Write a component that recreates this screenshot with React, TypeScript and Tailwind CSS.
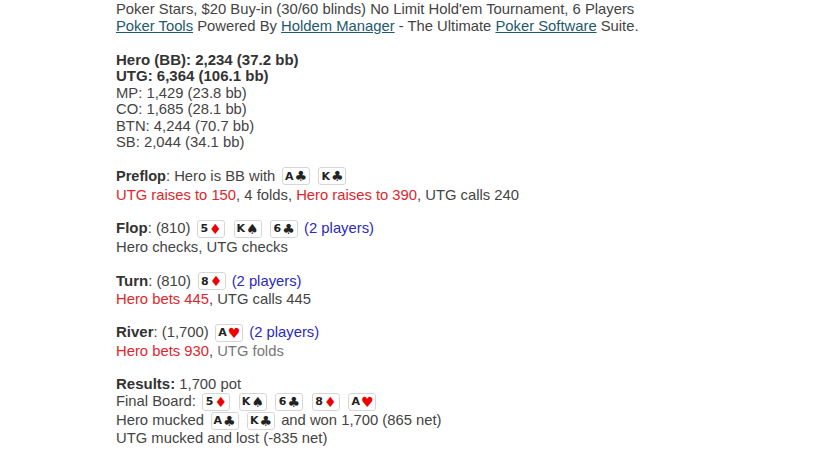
const RED = 'text-[#e0262c]'
const BLUE = 'text-[#2a2ac0]'
const LINK = 'text-[#23596e] underline'
const BOLD = 'text-[15px] font-bold text-[#333333]'

const suits: Record<string, { glyph: string; color: string }> = {
  c: { glyph: '♣', color: 'text-[#222222]' },
  s: { glyph: '♠', color: 'text-[#222222]' },
  d: { glyph: '♦', color: 'text-[#ee0000]' },
  h: { glyph: '♥', color: 'text-[#ee0000]' },
}

function Card({ rank, suit }: { rank: string; suit: string }) {
  const s = suits[suit]
  return (
    <span className="ml-[2.5px] mr-[1.9px] inline-flex h-[18px] w-[28px] items-center justify-center gap-[1px] rounded-[3px] border border-[#d6d6d6] bg-white align-[1px] leading-none">
      <span className="font-['DejaVu_Sans'] text-[11px] font-bold text-[#222222]">{rank}</span>
      <span className={`font-['DejaVu_Sans'] text-[14px] ${s.color}`}>{s.glyph}</span>
    </span>
  )
}

function Line({ children, h = 'h-[16.5px] leading-[16.5px]' }: { children: React.ReactNode; h?: string }) {
  return <div className={`${h} whitespace-nowrap`}>{children}</div>
}

export default function App() {
  return (
    <div className="h-[460px] w-[820px] overflow-hidden bg-white pl-[116px] pt-[1px] font-['Liberation_Sans',Arial,sans-serif] text-[14.8px] text-[#444444]">
      <div className="mb-[17.5px]">
        <Line>Poker Stars, $20 Buy-in (30/60 blinds) No Limit Hold'em Tournament, 6 Players</Line>
        <Line>
          <a className={LINK}>Poker Tools</a> Powered By <a className={LINK}>Holdem Manager</a> - The Ultimate{' '}
          <a className={LINK}>Poker Software</a> Suite.
        </Line>
      </div>

      <div className="mb-[16px]">
        <Line><b className={BOLD}>Hero (BB): 2,234 (37.2 bb)</b></Line>
        <Line><b className={BOLD}>UTG: 6,364 (106.1 bb)</b></Line>
        <Line>MP: 1,429 (23.8 bb)</Line>
        <Line>CO: 1,685 (28.1 bb)</Line>
        <Line>BTN: 4,244 (70.7 bb)</Line>
        <Line>SB: 2,044 (34.1 bb)</Line>
      </div>

      <div className="mb-[15px]">
        <Line h="h-[20px] leading-[19px]"><b className="text-[14.5px] font-bold text-[#333333]">Preflop</b>: Hero is BB with <Card rank="A" suit="c" /> <Card rank="K" suit="c" /></Line>
        <Line><span className={RED}>UTG raises to 150</span>, 4 folds, <span className={RED}>Hero raises to 390</span>, UTG calls 240</Line>
      </div>

      <div className="mb-[15px]">
        <Line h="h-[21px] leading-[20px]"><b className={BOLD}>Flop</b>: (810) <Card rank="5" suit="d" /> <Card rank="K" suit="s" /> <Card rank="6" suit="c" /> <span className={BLUE}>(2 players)</span></Line>
        <Line>Hero checks, UTG checks</Line>
      </div>

      <div className="mb-[15px]">
        <Line h="h-[20px] leading-[19px]"><b className={BOLD}>Turn</b>: (810) <Card rank="8" suit="d" /> <span className={BLUE}>(2 players)</span></Line>
        <Line><span className={RED}>Hero bets 445</span>, UTG calls 445</Line>
      </div>

      <div className="mb-[16px]">
        <Line h="h-[21px] leading-[20px]"><b className={BOLD}>River</b>: (1,700) <Card rank="A" suit="h" /> <span className={BLUE}>(2 players)</span></Line>
        <Line><span className={RED}>Hero bets 930</span>, <span className="text-[#777777]">UTG folds</span></Line>
      </div>

      <div>
        <Line><b className={BOLD}>Results:</b> 1,700 pot</Line>
        <Line h="h-[19px] leading-[18px]">Final Board: <Card rank="5" suit="d" /> <Card rank="K" suit="s" /> <Card rank="6" suit="c" /> <Card rank="8" suit="d" /> <Card rank="A" suit="h" /></Line>
        <Line h="h-[18px] leading-[18px]">Hero mucked <Card rank="A" suit="c" /> <Card rank="K" suit="c" /> and won 1,700 (865 net)</Line>
        <Line h="h-[19px] leading-[19px]">UTG mucked and lost (-835 net)</Line>
      </div>
    </div>
  )
}
